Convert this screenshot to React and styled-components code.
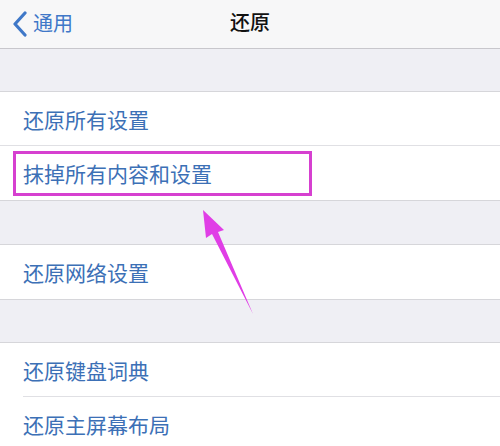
import styled, { createGlobalStyle } from "styled-components";

const GlobalStyle = createGlobalStyle`
    body {
        margin: 0;
        background: #efeff4;
        font-family: "Noto Sans CJK SC", "Noto Sans", sans-serif;
    }
`;

export default function App() {
    return (
        <Page>
            <GlobalStyle />
            <NavBar>
                <Back>
                    <svg width="16" height="26" viewBox="0 0 16 26">
                        <path d="M13 2 L3 13 L13 24" fill="none" stroke="#3f78c8" strokeWidth="3.2" strokeLinecap="round" strokeLinejoin="round" />
                    </svg>
                    <span>通用</span>
                </Back>
                <Title>还原</Title>
            </NavBar>

            <Gap height={42} />
            <Group>
                <Row>还原所有设置</Row>
                <Row last>
                    <Highlight>抹掉所有内容和设置</Highlight>
                </Row>
            </Group>

            <Gap height={43} />
            <Group>
                <Row last>还原网络设置</Row>
            </Group>

            <Gap height={42} />
            <Group>
                <Row inset>还原键盘词典</Row>
                <Row last>还原主屏幕布局</Row>
            </Group>

            <Arrow width="70" height="120" viewBox="0 0 70 120">
                <polygon points="5,5 26,25 20,27 55,109 14,29 8,33" fill="#e03ee6" />
            </Arrow>
        </Page>
    );
}

const Page = styled.div`
    position: relative;
    width: 500px;
    height: 446px;
    overflow: hidden;
    background: #efeff4;
`;

const NavBar = styled.div`
    height: 48px;
    background: #f7f7f8;
    border-bottom: 1px solid #c8c7cc;
    display: flex;
    align-items: center;
    justify-content: center;
    position: relative;
`;

const Back = styled.div`
    position: absolute;
    left: 12px;
    top: 0;
    height: 48px;
    display: flex;
    align-items: center;
    gap: 5px;
    color: #3f78c8;
    font-size: 20px;
    span {
        margin-top: -4px;
    }
`;

const Title = styled.div`
    font-size: 20px;
    font-weight: 500;
    color: #111;
    margin-top: -6px;
`;

const Gap = styled.div`
    height: ${(p) => p.height}px;
`;

const Group = styled.div`
    background: #fff;
    border-top: 1px solid #d6d6da;
    border-bottom: 1px solid #d6d6da;
`;

const Row = styled.div`
    height: 54px;
    display: flex;
    align-items: center;
    padding-left: 23px;
    font-size: 21px;
    color: #3c70b6;
    position: relative;
    &::after {
        content: "";
        display: ${(p) => (p.last ? "none" : "block")};
        position: absolute;
        left: ${(p) => (p.inset ? "23px" : "0")};
        right: 0;
        bottom: 0;
        height: 1px;
        background: #e0e0e4;
    }
`;

const Highlight = styled.span`
    margin-left: -10px;
    padding: 6px 97px 6px 7px;
    border: 3px solid #d640d0;
    line-height: 27px;
`;

const Arrow = styled.svg`
    position: absolute;
    left: 198px;
    top: 205px;
`;
